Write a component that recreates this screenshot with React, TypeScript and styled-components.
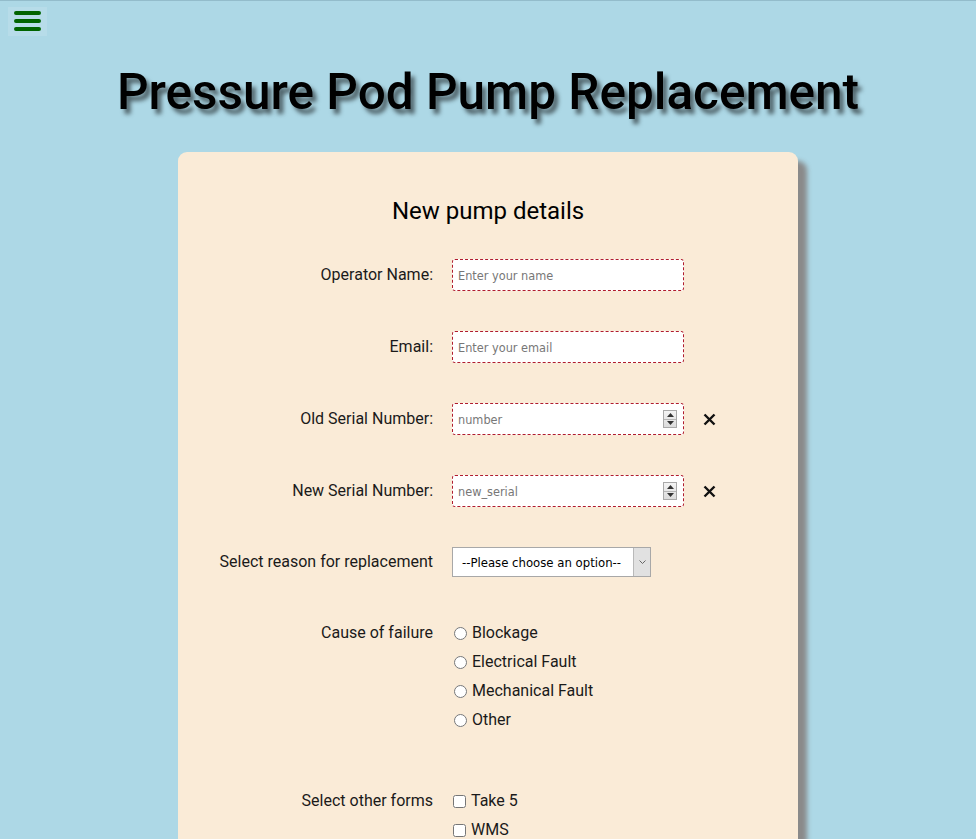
import React from "react";
import styled, { createGlobalStyle } from "styled-components";

const GlobalStyle = createGlobalStyle`
  html, body {
    margin: 0;
    padding: 0;
    background: #add8e6;
    font-family: Roboto, "Noto Sans", Arial, sans-serif;
    color: #111;
  }
  * { box-sizing: border-box; }
`;

const Page = styled.div`
  min-height: 839px;
  border-top: 1px solid #93bccb;
`;

const TopBar = styled.header`
  display: flex;
  align-items: center;
  padding: 4px 0 0 8px;
  height: 36px;
`;

const MenuButton = styled.button`
  width: 39px;
  height: 29px;
  display: flex;
  align-items: center;
  justify-content: center;
  border: none;
  padding: 0;
  background: rgba(255, 255, 255, 0.12);
  cursor: pointer;
`;

const Title = styled.h1`
  margin: 23px 0 0;
  text-align: center;
  font-family: Roboto, Arial, sans-serif;
  font-weight: 500;
  font-size: 49.5px;
  line-height: 64px;
  color: #000;
  text-shadow: 4px 5px 4px rgba(0, 0, 0, 0.55);
`;

const Card = styled.section`
  width: 620px;
  margin: 28px auto 0;
  background: #faebd7;
  border-radius: 9px;
  box-shadow: 9px 9px 5px #8a8a8a;
  padding: 45px 0 60px;
`;

const Heading = styled.h2`
  margin: 0 0 34px;
  text-align: center;
  font-weight: 400;
  font-size: 24px;
  line-height: 28px;
  color: #000;
`;

const Row = styled.div<{ $align?: string; $mt?: number }>`
  display: flex;
  align-items: ${(p) => p.$align || "center"};
  margin-top: ${(p) => (p.$mt ?? 40)}px;
`;

const Label = styled.label`
  width: 255px;
  flex: none;
  text-align: right;
  margin-right: 19px;
  font-size: 16px;
  line-height: 20px;
  color: #1a1a1a;
`;

const FieldBox = styled.div`
  width: 232px;
  height: 32px;
  display: flex;
  align-items: center;
  background: #fff;
  border: 1px dashed #b01c2e;
  border-radius: 3px;
  padding: 0 6px 0 5px;
`;

const TextInput = styled.input`
  flex: 1;
  min-width: 0;
  border: none;
  outline: none;
  background: transparent;
  padding: 0;
  font-family: "DejaVu Sans Condensed", "DejaVu Sans", sans-serif;
  font-size: 12.6px;
  color: #222;
  &::placeholder {
    color: #777;
  }
`;

const Spinner = styled.div`
  width: 14px;
  height: 18px;
  flex: none;
  display: flex;
  flex-direction: column;
  border: 1px solid #a9a9a9;
  background: linear-gradient(#f4f4f4, #dcdcdc);
`;

const SpinHalf = styled.div`
  flex: 1;
  display: flex;
  align-items: center;
  justify-content: center;
  & + & {
    border-top: 1px solid #b5b5b5;
  }
`;

const ClearButton = styled.button`
  margin-left: 18px;
  width: 14px;
  height: 14px;
  padding: 0;
  border: none;
  background: transparent;
  display: flex;
  align-items: center;
  justify-content: center;
  cursor: pointer;
`;

const SelectBox = styled.div`
  width: 199px;
  height: 30px;
  display: flex;
  background: #fff;
  border: 1px solid #a8a8a8;
`;

const Select = styled.select`
  flex: 1;
  min-width: 0;
  appearance: none;
  -webkit-appearance: none;
  border: none;
  outline: none;
  background: transparent;
  padding: 0 0 0 9px;
  font-family: "DejaVu Sans Condensed", "DejaVu Sans", sans-serif;
  font-size: 13px;
  color: #000;
`;

const SelectArrow = styled.div`
  width: 17px;
  flex: none;
  display: flex;
  align-items: center;
  justify-content: center;
  background: #e1e1e1;
  border-left: 1px solid #b9b9b9;
`;

const OptionList = styled.div`
  display: flex;
  flex-direction: column;
  gap: 9px;
`;

const OptionItem = styled.label`
  display: flex;
  align-items: center;
  font-size: 16px;
  line-height: 20px;
  color: #1a1a1a;
`;

const Radio = styled.input`
  width: 13px;
  height: 13px;
  margin: 0 5px 0 2px;
`;

const Check = styled.input`
  width: 13px;
  height: 13px;
  margin: 0 5px 0 1px;
`;

const XIcon = () => (
  <svg width="13" height="13" viewBox="0 0 13 13">
    <path d="M1.5 1.5 L11.5 11.5 M11.5 1.5 L1.5 11.5" stroke="#111" strokeWidth="2.4" strokeLinecap="butt" />
  </svg>
);

const Up = () => (
  <svg width="7" height="4" viewBox="0 0 7 4">
    <path d="M3.5 0 L7 4 L0 4 Z" fill="#333" />
  </svg>
);
const Down = () => (
  <svg width="7" height="4" viewBox="0 0 7 4">
    <path d="M0 0 L7 0 L3.5 4 Z" fill="#333" />
  </svg>
);

const NumberField = ({ placeholder }: { placeholder: string }) => (
  <>
    <FieldBox>
      <TextInput placeholder={placeholder} />
      <Spinner>
        <SpinHalf>
          <Up />
        </SpinHalf>
        <SpinHalf>
          <Down />
        </SpinHalf>
      </Spinner>
    </FieldBox>
    <ClearButton aria-label="clear">
      <XIcon />
    </ClearButton>
  </>
);

export default function App() {
  return (
    <>
      <GlobalStyle />
      <Page>
        <TopBar>
          <MenuButton aria-label="menu">
            <svg width="27" height="22" viewBox="0 0 27 22">
              <path d="M2 3 H25 M2 11 H25 M2 19 H25" stroke="#006400" strokeWidth="4" strokeLinecap="round" />
            </svg>
          </MenuButton>
        </TopBar>
        <Title>Pressure Pod Pump Replacement</Title>
        <Card>
          <Heading>New pump details</Heading>
          <Row $mt={0}>
            <Label>Operator Name:</Label>
            <FieldBox>
              <TextInput placeholder="Enter your name" />
            </FieldBox>
          </Row>
          <Row>
            <Label>Email:</Label>
            <FieldBox>
              <TextInput placeholder="Enter your email" />
            </FieldBox>
          </Row>
          <Row>
            <Label>Old Serial Number:</Label>
            <NumberField placeholder="number" />
          </Row>
          <Row>
            <Label>New Serial Number:</Label>
            <NumberField placeholder="new_serial" />
          </Row>
          <Row>
            <Label>Select reason for replacement</Label>
            <SelectBox>
              <Select defaultValue="">
                <option value="">--Please choose an option--</option>
                <option value="failure">Failure</option>
                <option value="upgrade">Upgrade</option>
              </Select>
              <SelectArrow>
                <svg width="7" height="5" viewBox="0 0 7 5">
                  <path d="M0.5 0.5 L3.5 3.5 L6.5 0.5" stroke="#666" strokeWidth="1" fill="none" />
                </svg>
              </SelectArrow>
            </SelectBox>
          </Row>
          <Row $align="flex-start" $mt={46}>
            <Label>Cause of failure</Label>
            <OptionList>
              {["Blockage", "Electrical Fault", "Mechanical Fault", "Other"].map((o) => (
                <OptionItem key={o}>
                  <Radio type="radio" name="cause" />
                  {o}
                </OptionItem>
              ))}
            </OptionList>
          </Row>
          <Row $align="flex-start" $mt={61}>
            <Label>Select other forms</Label>
            <OptionList>
              {["Take 5", "WMS"].map((o) => (
                <OptionItem key={o}>
                  <Check type="checkbox" />
                  {o}
                </OptionItem>
              ))}
            </OptionList>
          </Row>
        </Card>
      </Page>
    </>
  );
}
